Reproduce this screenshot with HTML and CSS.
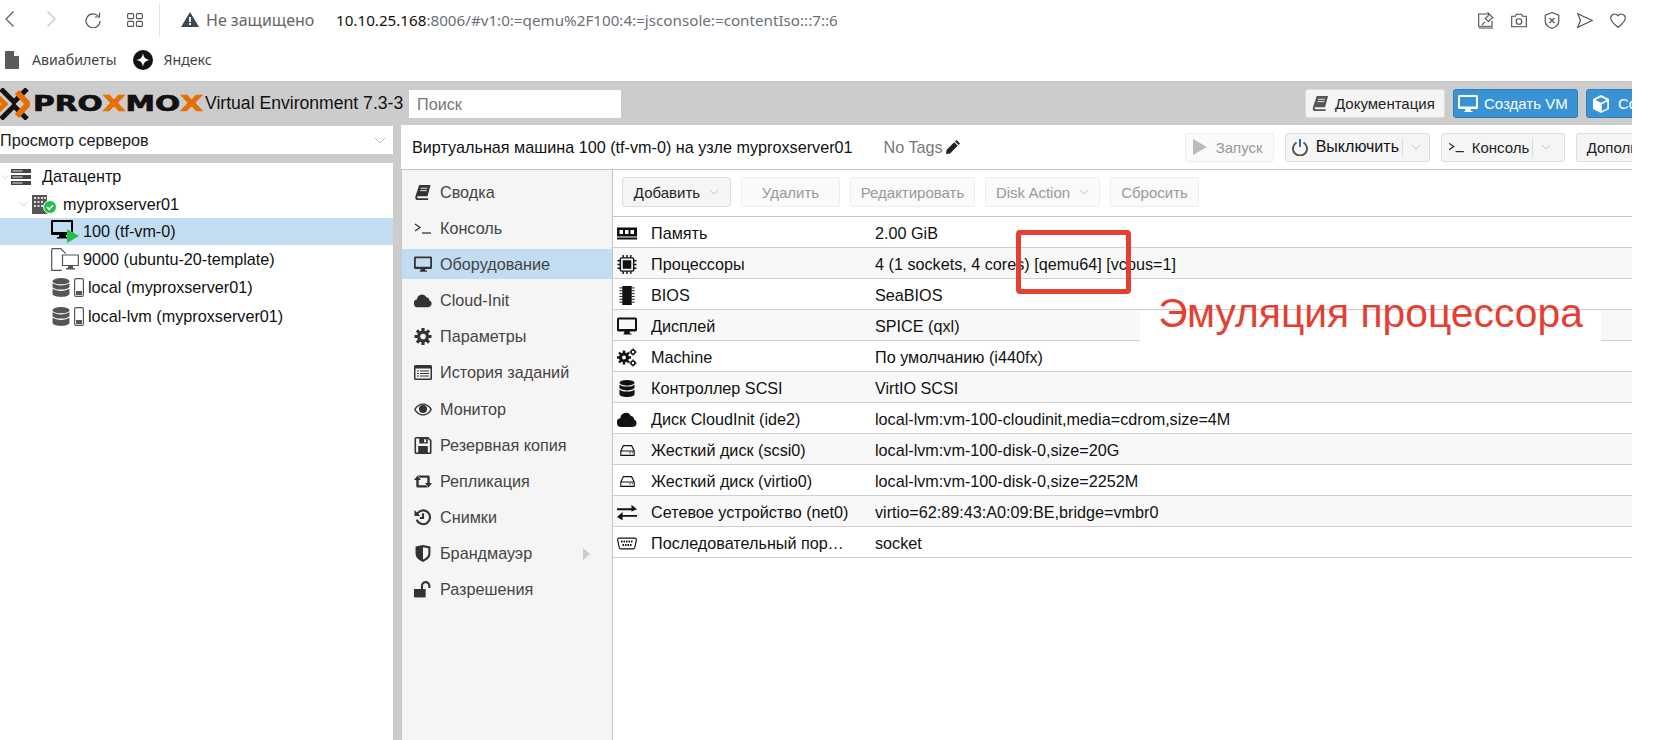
FILE: index.html
```html
<!DOCTYPE html>
<html lang="ru">
<head>
<meta charset="utf-8">
<title>Proxmox</title>
<link rel="stylesheet" href="styles.css">
</head>
<body>
<svg class="sprite" width="0" height="0">
  <symbol id="book" viewBox="0 0 18 18"><path d="M5 1h12l-3.2 12H3.6c-1 0-1 2 0 2h11.2l-.6 2H3C1 17 .4 15 1 13z" fill="currentColor"/><path d="M6.5 4.5h7M6 7h7" stroke="#f5f5f5" stroke-width="1"/></symbol>
  <symbol id="term" viewBox="0 0 18 12"><path d="M1 1.5 6 5 1 8.500" fill="none" stroke="currentColor" stroke-width="1.300"/><path d="M8 10.500h9" stroke="currentColor" stroke-width="1.300"/></symbol>
  <symbol id="desk" viewBox="0 0 20 18"><path d="M1.500 0h17A1.500 1.500 0 0 1 20 1.500v11a1.500 1.500 0 0 1-1.500 1.500h-6l.5 2h1.500v1h-8v-1H7l.5-2h-6A1.500 1.500 0 0 1 0 12.500v-11A1.500 1.500 0 0 1 1.500 0zM2 2v9.500h16V2z" fill="currentColor" fill-rule="evenodd"/></symbol>
  <symbol id="cloud" viewBox="0 0 20 15"><path d="M4.500 15A4.500 4.500 0 0 1 3.400 6.100 5.500 5.500 0 0 1 13.800 3.900 3.600 3.600 0 0 1 17 7.300 4 4 0 0 1 16 15z" fill="currentColor"/></symbol>
  <symbol id="gear" viewBox="0 0 16 16"><circle cx="8" cy="8" r="4.200" fill="none" stroke="currentColor" stroke-width="3"/><path d="M8 0v3M8 13v3M0 8h3M13 8h3M2.300 2.300l2.200 2.200M11.500 11.500l2.200 2.200M13.700 2.300l-2.200 2.200M4.500 11.500l-2.200 2.200" stroke="currentColor" stroke-width="3"/></symbol>
  <symbol id="list" viewBox="0 0 18 15"><path d="M1.500 0h15A1.500 1.500 0 0 1 18 1.500v12a1.500 1.500 0 0 1-1.500 1.500h-15A1.500 1.500 0 0 1 0 13.500v-12A1.500 1.500 0 0 1 1.500 0zM1.500 3.500v10h15v-10z" fill="currentColor" fill-rule="evenodd"/><path d="M3 6h2M6 6h9M3 8.500h2M6 8.500h9M3 11h2M6 11h9" stroke="currentColor"/></symbol>
  <symbol id="eye" viewBox="0 0 18 12"><path d="M9 0C5 0 2 2.500 0 6c2 3.500 5 6 9 6s7-2.500 9-6c-2-3.500-5-6-9-6zm0 1.200c3 0 5.600 2 7.400 4.800C14.600 8.800 12 10.800 9 10.800S3.400 8.800 1.600 6C3.400 3.200 6 1.200 9 1.200z" fill="currentColor" fill-rule="evenodd"/><circle cx="9" cy="5.500" r="4" fill="currentColor"/></symbol>
  <symbol id="save" viewBox="0 0 16 16"><path d="M1.500 0H13l3 3v11.500a1.500 1.500 0 0 1-1.500 1.500h-13A1.500 1.500 0 0 1 0 14.500v-13A1.500 1.500 0 0 1 1.500 0zM1.500 1.500v13h13V3.600L12.500 1.700V6h-8V1.500zM9 2v3h2V2zM3.500 8.500h9v6h-9z" fill="currentColor" fill-rule="evenodd"/></symbol>
  <symbol id="retweet" viewBox="0 0 18 12"><path d="M3.500 0 7 4.500H4.700v5.200H12l2 2.300H3.500a1.200 1.200 0 0 1-1.200-1.200V4.500H0zM14.500 12 11 7.500h2.300V2.300H6L4 0h10.500a1.200 1.200 0 0 1 1.200 1.200v6.300H18z" fill="currentColor"/></symbol>
  <symbol id="history" viewBox="0 0 16 16"><path d="M2.500 4.500A6.500 6.500 0 1 1 2 10" fill="none" stroke="currentColor" stroke-width="2"/><path d="M0 1v5.500h5.500z" fill="currentColor"/><path d="M8 4v4.500H5" fill="none" stroke="currentColor" stroke-width="2"/></symbol>
  <symbol id="shield" viewBox="0 0 14 16"><path d="M0 1.500 7 0l7 1.500V8c0 4-3.500 6.500-7 8-3.500-1.500-7-4-7-8zM7 2v11.700c2.500-1.200 5-3 5-5.700V3z" fill="currentColor" fill-rule="evenodd"/></symbol>
  <symbol id="unlock" viewBox="0 0 17 15"><path d="M0 7h11v8H0z" fill="currentColor"/><path d="M7.500 7V4a3.500 3.500 0 0 1 7 0v2" fill="none" stroke="currentColor" stroke-width="2"/></symbol>
  <symbol id="ram" viewBox="0 0 20 12"><path d="M0 0h20v9H0zM0 10h20v2H0z" fill="currentColor"/><path d="M2.500 2.500h3.500v4H2.500zM8 2.500h3.500v4H8zM13.500 2.500H17v4h-3.500z" fill="#fff"/></symbol>
  <symbol id="cpu" viewBox="0 0 20 20"><rect x="3" y="3" width="14" height="14" rx="1.500" fill="none" stroke="currentColor" stroke-width="1.500"/><rect x="5.500" y="5.500" width="9" height="9" fill="currentColor"/><path d="M6 0v3M10 0v3M14 0v3M6 17v3M10 17v3M14 17v3M0 6h3M0 10h3M0 14h3M17 6h3M17 10h3M17 14h3" stroke="currentColor" stroke-width="1.500"/></symbol>
  <symbol id="bios" viewBox="0 0 16 20"><rect x="3" y="0" width="10" height="20" fill="currentColor"/><path d="M0 2h3M0 5h3M0 8h3M0 11h3M0 14h3M0 17h3M13 2h3M13 5h3M13 8h3M13 11h3M13 14h3M13 17h3" stroke="currentColor"/></symbol>
  <symbol id="gears" viewBox="0 0 20 18"><g fill="none" stroke="currentColor"><circle cx="7" cy="9" r="3.500" stroke-width="3"/><path d="M7 2v3M7 13v3M0 9h3M11 9h3M2 4l2 2M10 12l2 2M12 4l-2 2M4 12l-2 2" stroke-width="2.400"/><circle cx="16" cy="3.500" r="2" stroke-width="1.500"/><path d="M16 0v1M16 6v1M12.500 3.500h1M18.500 3.500h1" stroke-width="1.500"/><circle cx="16" cy="14.500" r="2" stroke-width="1.500"/><path d="M16 11v1M16 17v1M12.500 14.500h1M18.500 14.500h1" stroke-width="1.500"/></g></symbol>
  <symbol id="db" viewBox="0 0 16 18"><ellipse cx="8" cy="3" rx="8" ry="3" fill="currentColor"/><path d="M0 4.800c1.500 1.700 5 2.200 8 2.200s6.500-.5 8-2.200V8c0 1.700-3.600 3-8 3S0 9.700 0 8z" fill="currentColor"/><path d="M0 10c1.500 1.700 5 2.200 8 2.200s6.500-.5 8-2.200v5c0 1.700-3.600 3-8 3s-8-1.300-8-3z" fill="currentColor"/></symbol>
  <symbol id="hdd" viewBox="0 0 16 12"><path d="M3.500.7h9L15.300 6.500v4.800H.7V6.500zM.7 6.500h14.600" fill="none" stroke="currentColor" stroke-width="1.200"/><path d="M10 8.500h1.500M12.800 8.500h1" stroke="currentColor" stroke-width="1.200"/></symbol>
  <symbol id="exch" viewBox="0 0 18 14"><path d="M0 3.200h13V0l5 4-5 2V4.900H0zM18 9.200H5V6.500l-5 4.500 5 3v-3.100h13z" fill="currentColor"/></symbol>
  <symbol id="serial" viewBox="0 0 20 12"><path d="M2 .7h16c1 0 1.500.8 1.300 1.800l-1.500 7.500c-.2 1-.8 1.300-1.500 1.300H3.700c-.7 0-1.300-.3-1.500-1.300L.7 2.500C.5 1.500 1 .7 2 .7z" fill="none" stroke="currentColor" stroke-width="1.200"/><path d="M4 4h12M5.500 7.500h9" stroke="currentColor" stroke-width="1.800" stroke-dasharray="1.500 1"/></symbol>
  <symbol id="chev" viewBox="0 0 12 7"><path d="M1 1l5 5 5-5" fill="none" stroke="currentColor" stroke-width="1"/></symbol>
</svg>

<header class="browser-bar">
  <svg class="b-back" viewBox="0 0 9 16"><path d="M8.500.500 1 8l7.500 7.500" fill="none" stroke="currentColor" stroke-width="1.100"/></svg>
  <svg class="b-fwd" viewBox="0 0 9 16"><path d="M.500.500 8 8l-7.500 7.500" fill="none" stroke="currentColor" stroke-width="1.100"/></svg>
  <svg class="b-reload" viewBox="0 0 16 16"><path d="M13.500 4.500A7 7 0 1 0 15 9" fill="none" stroke="currentColor" stroke-width="1.200"/><path d="M14.500.500v4.500H10" fill="none" stroke="currentColor" stroke-width="1.200"/></svg>
  <svg class="b-grid" viewBox="0 0 16 14"><g fill="none" stroke="currentColor" stroke-width="1.100"><rect x=".6" y=".6" width="6" height="5" rx="1"/><rect x="9.400" y=".6" width="6" height="5" rx="1"/><rect x=".6" y="8.400" width="6" height="5" rx="1"/><rect x="9.400" y="8.400" width="6" height="5" rx="1"/></g></svg>
  <span class="b-divider"></span>
  <svg class="b-warn" viewBox="0 0 18 15"><path d="M9 0l9 15H0z" fill="#3d4750"/><path d="M8.100 5h1.800v5H8.100zM8.100 11h1.800v2H8.100z" fill="#fff"/></svg>
  <span class="b-insecure">Не защищено</span>
  <span class="b-url">10.10.25.168<span class="b-url-rest">:8006/#v1:0:=qemu%2F100:4:=jsconsole:=contentIso:::7::6</span></span>
  <div class="b-actions">
    <svg viewBox="0 0 16 17"><path d="M9 2H.700v12.300H14V9M.700 16h14.600" fill="none" stroke="currentColor" stroke-width="1.100"/><path d="M10 .800l5 5-2 .8-2.500 3-3.300-3.300 3-2.500zM7 9.800 4 12.800" fill="none" stroke="currentColor" stroke-width="1.100"/></svg>
    <svg viewBox="0 0 16 14"><path d="M.7 2.700h3.800L5.500.7h5l1 2h3.800v10.600H.7z" fill="none" stroke="currentColor" stroke-width="1.100"/><circle cx="8" cy="8" r="2.800" fill="none" stroke="currentColor" stroke-width="1.100"/></svg>
    <svg viewBox="0 0 16 17"><path d="M8 .6l6.800 2.600v6c0 3.500-3 5.800-6.800 7.200-3.800-1.400-6.800-3.700-6.800-7.200v-6zM5.500 6l5 5M10.500 6l-5 5" fill="none" stroke="currentColor" stroke-width="1.100"/></svg>
    <svg viewBox="0 0 16 15"><path d="M.7.700 15.300 7.500.7 14.300l2.800-6.800z" fill="none" stroke="currentColor" stroke-width="1.100"/></svg>
    <svg viewBox="0 0 16 15"><path d="M8 14.200C3 10.500.7 8 .7 5A4 4 0 0 1 8 2.800 4 4 0 0 1 15.300 5c0 3-2.300 5.500-7.300 9.200z" fill="none" stroke="currentColor" stroke-width="1.100"/></svg>
  </div>
</header>

<nav class="bookmarks">
  <svg class="bm-doc" viewBox="0 0 14 18"><path d="M1 0h8l5 5v12a1 1 0 0 1-1 1H1a1 1 0 0 1-1-1V1a1 1 0 0 1 1-1z" fill="#5a5a5a"/><path d="M9 0v5h5z" fill="#fff"/></svg>
  <span class="bm-label bm-air">Авиабилеты</span>
  <svg class="bm-ya" viewBox="0 0 20 20"><circle cx="10" cy="10" r="10" fill="#111"/><path d="M10 3c.6 4.500 2.500 6.400 7 7-4.500.6-6.400 2.500-7 7-.6-4.500-2.500-6.400-7-7 4.500-.6 6.400-2.500 7-7z" fill="#fff"/></svg>
  <span class="bm-label">Яндекс</span>
</nav>

<div class="app">
  <div class="top">
    <svg class="logo-x" viewBox="0 0 30 32"><path d="M1 1l13 13L27 1" fill="none" stroke="#111" stroke-width="5"/><path d="M1 31l13-13 13 13" fill="none" stroke="#111" stroke-width="5"/><path d="M-6 5 5 16-6 27" fill="none" stroke="#e57000" stroke-width="5"/><path d="M17 4 28 16 17 28" fill="none" stroke="#e57000" stroke-width="6"/></svg>
    <span class="logo-text">PRO<b>X</b>MO<b>X</b></span>
    <span class="version">Virtual Environment 7.3-3</span>
    <span class="search">Поиск</span>
    <div class="top-actions">
      <span class="btn btn-doc"><svg class="ico ico-doc"><use href="#book"/></svg>Документация</span>
      <span class="btn btn-blue btn-vm"><svg class="ico ico-vm"><use href="#desk"/></svg>Создать VM</span>
      <span class="btn btn-blue btn-ct"><svg class="ico ico-ct" viewBox="0 0 18 18"><path d="M9 0l8 4v10l-8 4-8-4V4z" fill="#fff"/><path d="M9 2.200 14.500 5 9 7.800 3.500 5zM9.800 9.300l5.500-2.800v6.800l-5.500 2.800z" fill="#3892d4"/></svg>Создать CT</span>
    </div>
  </div>

  <div class="main">
    <aside class="side">
      <div class="view-select">Просмотр серверов<svg class="select-chev"><use href="#chev"/></svg></div>
      <ul class="tree">
        <li class="t-row t-dc"><svg class="t-chev"><use href="#chev"/></svg>
          <svg class="t-dc-ico" viewBox="0 0 20 16"><path d="M0 0h20v4H0zM0 6h20v4H0zM0 12h20v4H0z" fill="#444"/><path d="M1.500 1.500h10v1h-10zM1.500 7.500h10v1h-10zM1.500 13.500h10v1h-10z" fill="#ddd"/></svg>
          <span>Датацентр</span></li>
        <li class="t-row t-node"><svg class="t-chev"><use href="#chev"/></svg>
          <svg class="t-node-ico" viewBox="0 0 25 19"><path d="M0 0h15v19H0z" fill="#555"/><path d="M2 2h2v2H2zM5.500 2h2v2h-2zM9 2h2v2H9zM12 2h2v2h-2zM2 6h2v2H2zM5.500 6h2v2h-2zM9 6h2v2H9zM2 10h2v2H2zM5.500 10h2v2h-2zM9 10h2v2H9z" fill="#ddd"/><circle cx="18" cy="12" r="6.500" fill="#21bf4b" stroke="#fff"/><path d="M15 12l2.200 2.300 3.800-4" fill="none" stroke="#fff" stroke-width="1.600"/></svg>
          <span>myproxserver01</span></li>
        <li class="t-row t-vm t-selected">
          <svg class="t-vm-ico" viewBox="0 0 28 23"><path d="M1 0h20a1 1 0 0 1 1 1v13a1 1 0 0 1-1 1h-6v2h2v1.500H6V17h2v-2H1a1 1 0 0 1-1-1V1a1 1 0 0 1 1-1zM2 2v10h18V2z" fill="#000" fill-rule="evenodd"/><path d="M16 9l12 7-12 7z" fill="#21bf4b"/></svg>
          <span>100 (tf-vm-0)</span></li>
        <li class="t-row t-vm t-tpl">
          <svg class="t-vm-ico" viewBox="0 0 28 23"><path d="M.7.7h9l5 5M.7.7v21.600h10" fill="none" stroke="#555" stroke-width="1.200"/><path d="M11.500 7h15.800v10.500H11.500z" fill="#fff" stroke="#555" stroke-width="1.200"/><path d="M17 18h5v2h2v1.500h-9V20h2z" fill="#555"/></svg>
          <span>9000 (ubuntu-20-template)</span></li>
        <li class="t-row t-st">
          <svg class="t-db"><use href="#db"/></svg>
          <svg class="t-bar" viewBox="0 0 10 19"><rect x=".6" y=".6" width="8.800" height="17.800" rx="1.500" fill="#fff" stroke="#555" stroke-width="1.200"/><rect x="2" y="13" width="6" height="4" fill="#555"/></svg>
          <span>local (myproxserver01)</span></li>
        <li class="t-row t-st">
          <svg class="t-db"><use href="#db"/></svg>
          <svg class="t-bar" viewBox="0 0 10 19"><rect x=".6" y=".6" width="8.800" height="17.800" rx="1.500" fill="#fff" stroke="#555" stroke-width="1.200"/><rect x="2" y="13" width="6" height="4" fill="#555"/></svg>
          <span>local-lvm (myproxserver01)</span></li>
      </ul>
    </aside>

    <section class="center">
      <div class="title-bar">
        <span class="vm-title">Виртуальная машина 100 (tf-vm-0) на узле myproxserver01</span>
        <span class="vm-tags">No Tags</span>
        <svg class="pencil" viewBox="0 0 14 14"><path d="M10.500 0 14 3.500 12.500 5 9 1.500zM8.200 2.300l3.500 3.500L4 13.500 0 14l.5-4z" fill="#222"/></svg>
        <div class="title-actions">
          <span class="btn btn-off btn-start"><svg class="ico ico-play" viewBox="0 0 14 16"><path d="M0 0l14 8-14 8z" fill="#bbb"/></svg>Запуск</span>
          <span class="btn btn-power"><svg class="ico ico-power" viewBox="0 0 16 17"><path d="M4.500 3.500a7 7 0 1 0 7 0" fill="none" stroke="#555" stroke-width="2"/><path d="M8 0v8" stroke="#2c70b0" stroke-width="2"/></svg>Выключить<i class="sep"></i><svg class="btn-chev"><use href="#chev"/></svg></span>
          <span class="btn btn-console"><svg class="ico ico-term"><use href="#term"/></svg>Консоль<i class="sep"></i><svg class="btn-chev"><use href="#chev"/></svg></span>
          <span class="btn btn-more">Дополнительно</span>
        </div>
      </div>
      <div class="vm-body">
        <ul class="menu">
          <li><svg class="m-ico"><use href="#book"/></svg>Сводка</li>
          <li><svg class="m-ico"><use href="#term"/></svg>Консоль</li>
          <li class="m-selected"><svg class="m-ico"><use href="#desk"/></svg>Оборудование</li>
          <li><svg class="m-ico"><use href="#cloud"/></svg>Cloud-Init</li>
          <li><svg class="m-ico"><use href="#gear"/></svg>Параметры</li>
          <li><svg class="m-ico"><use href="#list"/></svg>История заданий</li>
          <li><svg class="m-ico"><use href="#eye"/></svg>Монитор</li>
          <li><svg class="m-ico"><use href="#save"/></svg>Резервная копия</li>
          <li><svg class="m-ico"><use href="#retweet"/></svg>Репликация</li>
          <li><svg class="m-ico"><use href="#history"/></svg>Снимки</li>
          <li><svg class="m-ico"><use href="#shield"/></svg>Брандмауэр<svg class="m-arrow" viewBox="0 0 7 12"><path d="M0 0l7 6-7 6z" fill="#ccc"/></svg></li>
          <li><svg class="m-ico"><use href="#unlock"/></svg>Разрешения</li>
        </ul>
        <div class="content">
          <div class="tools">
            <span class="btn btn-add">Добавить<svg class="btn-chev"><use href="#chev"/></svg></span>
            <span class="btn btn-off btn-del">Удалить</span>
            <span class="btn btn-off btn-edit">Редактировать</span>
            <span class="btn btn-off btn-disk">Disk Action<svg class="btn-chev"><use href="#chev"/></svg></span>
            <span class="btn btn-off btn-reset">Сбросить</span>
          </div>
          <div class="grid">
            <div class="row"><svg class="r-ico"><use href="#ram"/></svg><span class="r-key">Память</span><span class="r-val">2.00 GiB</span></div>
            <div class="row"><svg class="r-ico"><use href="#cpu"/></svg><span class="r-key">Процессоры</span><span class="r-val">4 (1 sockets, 4 cores) [qemu64] [vcpus=1]</span></div>
            <div class="row"><svg class="r-ico"><use href="#bios"/></svg><span class="r-key">BIOS</span><span class="r-val">SeaBIOS</span></div>
            <div class="row"><svg class="r-ico"><use href="#desk"/></svg><span class="r-key">Дисплей</span><span class="r-val">SPICE (qxl)</span></div>
            <div class="row"><svg class="r-ico"><use href="#gears"/></svg><span class="r-key">Machine</span><span class="r-val">По умолчанию (i440fx)</span></div>
            <div class="row"><svg class="r-ico r-db"><use href="#db"/></svg><span class="r-key">Контроллер SCSI</span><span class="r-val">VirtIO SCSI</span></div>
            <div class="row"><svg class="r-ico"><use href="#cloud"/></svg><span class="r-key">Диск CloudInit (ide2)</span><span class="r-val">local-lvm:vm-100-cloudinit,media=cdrom,size=4M</span></div>
            <div class="row"><svg class="r-ico r-hdd"><use href="#hdd"/></svg><span class="r-key">Жесткий диск (scsi0)</span><span class="r-val">local-lvm:vm-100-disk-0,size=20G</span></div>
            <div class="row"><svg class="r-ico r-hdd"><use href="#hdd"/></svg><span class="r-key">Жесткий диск (virtio0)</span><span class="r-val">local-lvm:vm-100-disk-0,size=2252M</span></div>
            <div class="row"><svg class="r-ico"><use href="#exch"/></svg><span class="r-key">Сетевое устройство (net0)</span><span class="r-val">virtio=62:89:43:A0:09:BE,bridge=vmbr0</span></div>
            <div class="row"><svg class="r-ico"><use href="#serial"/></svg><span class="r-key">Последовательный порт (serial0)</span><span class="r-val">socket</span></div>
          </div>
        </div>
      </div>
    </section>
  </div>
</div>

<div class="note-box"></div>
<div class="note-label">Эмуляция процессора</div>
</body>
</html>
```
FILE: styles.css
```css
* { box-sizing: border-box; }
html, body { margin: 0; padding: 0; }
body { width: 1668px; height: 740px; overflow: hidden; background: #fff; font-family: "Liberation Sans", Arial, sans-serif; color: #000; position: relative; }
ul { list-style: none; margin: 0; padding: 0; }
.sprite { position: absolute; }
svg { display: block; flex-shrink: 0; }

.browser-bar { height: 40px; display: flex; align-items: center; color: #555; }
.b-back { width: 9px; height: 16px; margin: 0 0 2px 5px; }
.b-fwd { width: 9px; height: 16px; margin: 0 0 2px 33px; color: #c4c4c4; }
.b-reload { width: 16px; height: 16px; margin: 0 0 1px 29px; }
.b-grid { width: 16px; height: 14px; margin: 0 0 1px 26px; }
.b-divider { width: 1px; height: 34px; background: #e4e4e4; margin-left: 16px; }
.b-warn { width: 18px; height: 15px; margin: 0 0 1px 21px; }
.b-insecure { font: 16px "Noto Sans", sans-serif; color: #666; margin-left: 7px; width: 130px; white-space: nowrap; flex-shrink: 0; }
.b-url { font: 15.2px "Noto Sans", sans-serif; color: #111; white-space: nowrap; }
.b-url-rest { color: #6b7078; }
.b-actions { margin-left: auto; margin-right: 42px; display: flex; gap: 17px; align-items: center; color: #444c53; }
.b-actions svg { width: 16px; height: 17px; }

.bookmarks { height: 41px; display: flex; align-items: center; padding-bottom: 2px; }
.bm-doc { width: 14px; height: 18px; margin-left: 5px; }
.bm-label { font: 14.2px "Noto Sans", sans-serif; color: #444; white-space: nowrap; }
.bm-air { margin-left: 13px; }
.bm-ya { width: 20px; height: 20px; margin: 0 10px 0 17px; }

.app { width: 1632px; height: 659px; background: #ccc; overflow: hidden; border-top: 1px solid #bcc2c7; display: flex; flex-direction: column; }
.top { height: 43px; flex-shrink: 0; display: flex; align-items: center; }
.logo-x { width: 30px; height: 32px; }
.logo-text { font: bold 21px "DejaVu Sans", sans-serif; color: #111; width: 172px; flex-shrink: 0; margin-left: 3px; -webkit-text-stroke: .7px #111; transform: scaleX(1.41); transform-origin: left center; white-space: nowrap; }
.logo-text b { color: #e57000; -webkit-text-stroke: .7px #e57000; }
.version { font-size: 17.6px; color: #111; width: 204px; flex-shrink: 0; white-space: nowrap; }
.search { width: 212px; height: 28px; flex-shrink: 0; background: #fff; color: #777; font-size: 16.2px; line-height: 28px; padding-left: 8px; }
.top-actions { margin-left: 684px; display: flex; gap: 8px; flex-shrink: 0; }

.btn { height: 29px; border: 1px solid #ddd; border-radius: 3px; background: #f5f5f5; font-size: 15px; color: #222; display: flex; align-items: center; white-space: nowrap; flex-shrink: 0; }
.btn-blue { background: #3892d4; border-color: #2f7fbb; color: #fff; }
.btn-off { background: #fafafa; border-color: #eee; color: #999; }
.ico { flex-shrink: 0; }
.btn-doc { width: 140px; padding-left: 6px; color: #222; }
.ico-doc { width: 17px; height: 17px; color: #555; margin-right: 6px; }
.btn-vm { width: 125px; padding-left: 4px; }
.ico-vm { width: 20px; height: 18px; margin-right: 6px; }
.btn-ct { width: 135px; padding-left: 5px; }
.ico-ct { width: 18px; height: 18px; margin-right: 8px; }

.main { flex: 1; display: flex; min-height: 0; }
.side { width: 393px; flex-shrink: 0; display: flex; flex-direction: column; gap: 9px; }
.view-select { height: 28px; background: #fff; margin-top: 1px; font-size: 16.2px; line-height: 26px; display: flex; justify-content: space-between; align-items: center; padding-right: 7px; color: #222; }
.select-chev { width: 12px; height: 7px; color: #bbb; }
.tree { flex: 1; background: #fff; font-size: 16.2px; color: #111; }
.t-row { height: 27px; display: flex; align-items: center; white-space: nowrap; }
.t-chev { width: 8px; height: 6px; color: #bbb; }
.t-dc { padding-left: 1px; }
.t-dc-ico { width: 20px; height: 16px; margin: 0 11px 0 2px; }
.t-node { padding-left: 19px; height: 28px; }
.t-node .t-chev { width: 9px; height: 6px; margin-right: 4px; }
.t-node-ico { width: 25px; height: 19px; margin-right: 6px; }
.t-vm { padding-left: 51px; }
.t-tpl { height: 28px; }
.t-st { height: 29px; padding-left: 52px; }
.t-vm-ico { width: 28px; height: 23px; margin-right: 4px; }
.t-selected { background: #c2ddf2; }
.t-db { width: 18px; height: 19px; color: #555; margin-right: 4px; }
.t-bar { width: 10px; height: 19px; margin-right: 4px; }

.center { flex: 1; min-width: 0; margin-left: 8px; background: #fff; display: flex; flex-direction: column; }
.title-bar { height: 45px; flex-shrink: 0; display: flex; align-items: center; padding-left: 11px; border-bottom: 1px solid #c5c5c5; font-size: 16.2px; }
.vm-title { color: #111; white-space: nowrap; flex-shrink: 0; }
.vm-tags { color: #777; margin-left: 31px; white-space: nowrap; flex-shrink: 0; }
.pencil { width: 14px; height: 14px; margin-left: 3px; }
.title-actions { display: flex; gap: 11px; margin-left: 225px; flex-shrink: 0; }
.btn-start { width: 89px; padding-left: 7px; }
.ico-play { width: 14px; height: 16px; margin-right: 9px; }
.btn-power { width: 145px; padding-left: 6px; color: #111; font-size: 16px; }
.ico-power { width: 16px; height: 17px; margin-right: 8px; }
.btn-console { width: 124px; padding-left: 6px; }
.ico-term { width: 17px; height: 11px; margin-right: 7px; }
.btn-more { width: 140px; padding-left: 10px; }
.sep { width: 1px; height: 19px; background: #ddd; margin: 0 8px 0 3px; }
.btn-chev { width: 10px; height: 6px; color: #bbb; }

.vm-body { flex: 1; display: flex; min-height: 0; border-left: 1px solid #c5c5c5; }
.menu { width: 211px; flex-shrink: 0; background: #f5f5f5; padding-top: 4px; border-right: 1px solid #c5c5c5; font-size: 16.2px; color: #444; }
.menu li { height: 36.2px; display: flex; align-items: center; padding-left: 12px; }
.m-ico { width: 18px; height: 17px; color: #333; margin-right: 8px; }
.menu .m-selected { height: 30px; margin: 3px 0; background: #c2ddf2; }
.m-arrow { width: 7px; height: 12px; margin-left: 51px; }

.content { flex: 1; min-width: 0; display: flex; flex-direction: column; }
.tools { height: 47px; flex-shrink: 0; display: flex; align-items: center; gap: 10px; padding: 0 0 2px 9px; border-bottom: 1px solid #c5c5c5; }
.tools .btn { height: 30px; justify-content: center; font-size: 15px; gap: 9px; }
.btn-add { width: 109px; }
.btn-del { width: 99px; }
.btn-edit { width: 125px; }
.btn-disk { width: 115px; }
.btn-reset { width: 89px; }

.row { height: 31px; display: flex; align-items: center; padding-top: 2px; border-bottom: 1px solid #cfcfcf; font-size: 16.2px; color: #111; white-space: nowrap; }
.row:nth-child(even) { background: #f8f8f8; }
.r-ico { width: 20px; height: 19px; margin: 0 14px 0 4px; color: #111; }
.r-db { width: 16px; height: 17px; margin: 0 16px 0 6px; }
.r-hdd { width: 15px; height: 11px; margin: 0 16px 0 7px; }
.r-key { width: 224px; padding-right: 24px; overflow: hidden; text-overflow: ellipsis; }

.note-box { position: absolute; left: 1016px; top: 230px; width: 115px; height: 64px; border: 5px solid #e53f33; border-radius: 4px; }
.note-label { position: absolute; left: 1140px; top: 311px; width: 461px; height: 31px; background: #fff; color: #e53f33; font-size: 40.8px; line-height: 4px; text-align: center; white-space: nowrap; }
```
